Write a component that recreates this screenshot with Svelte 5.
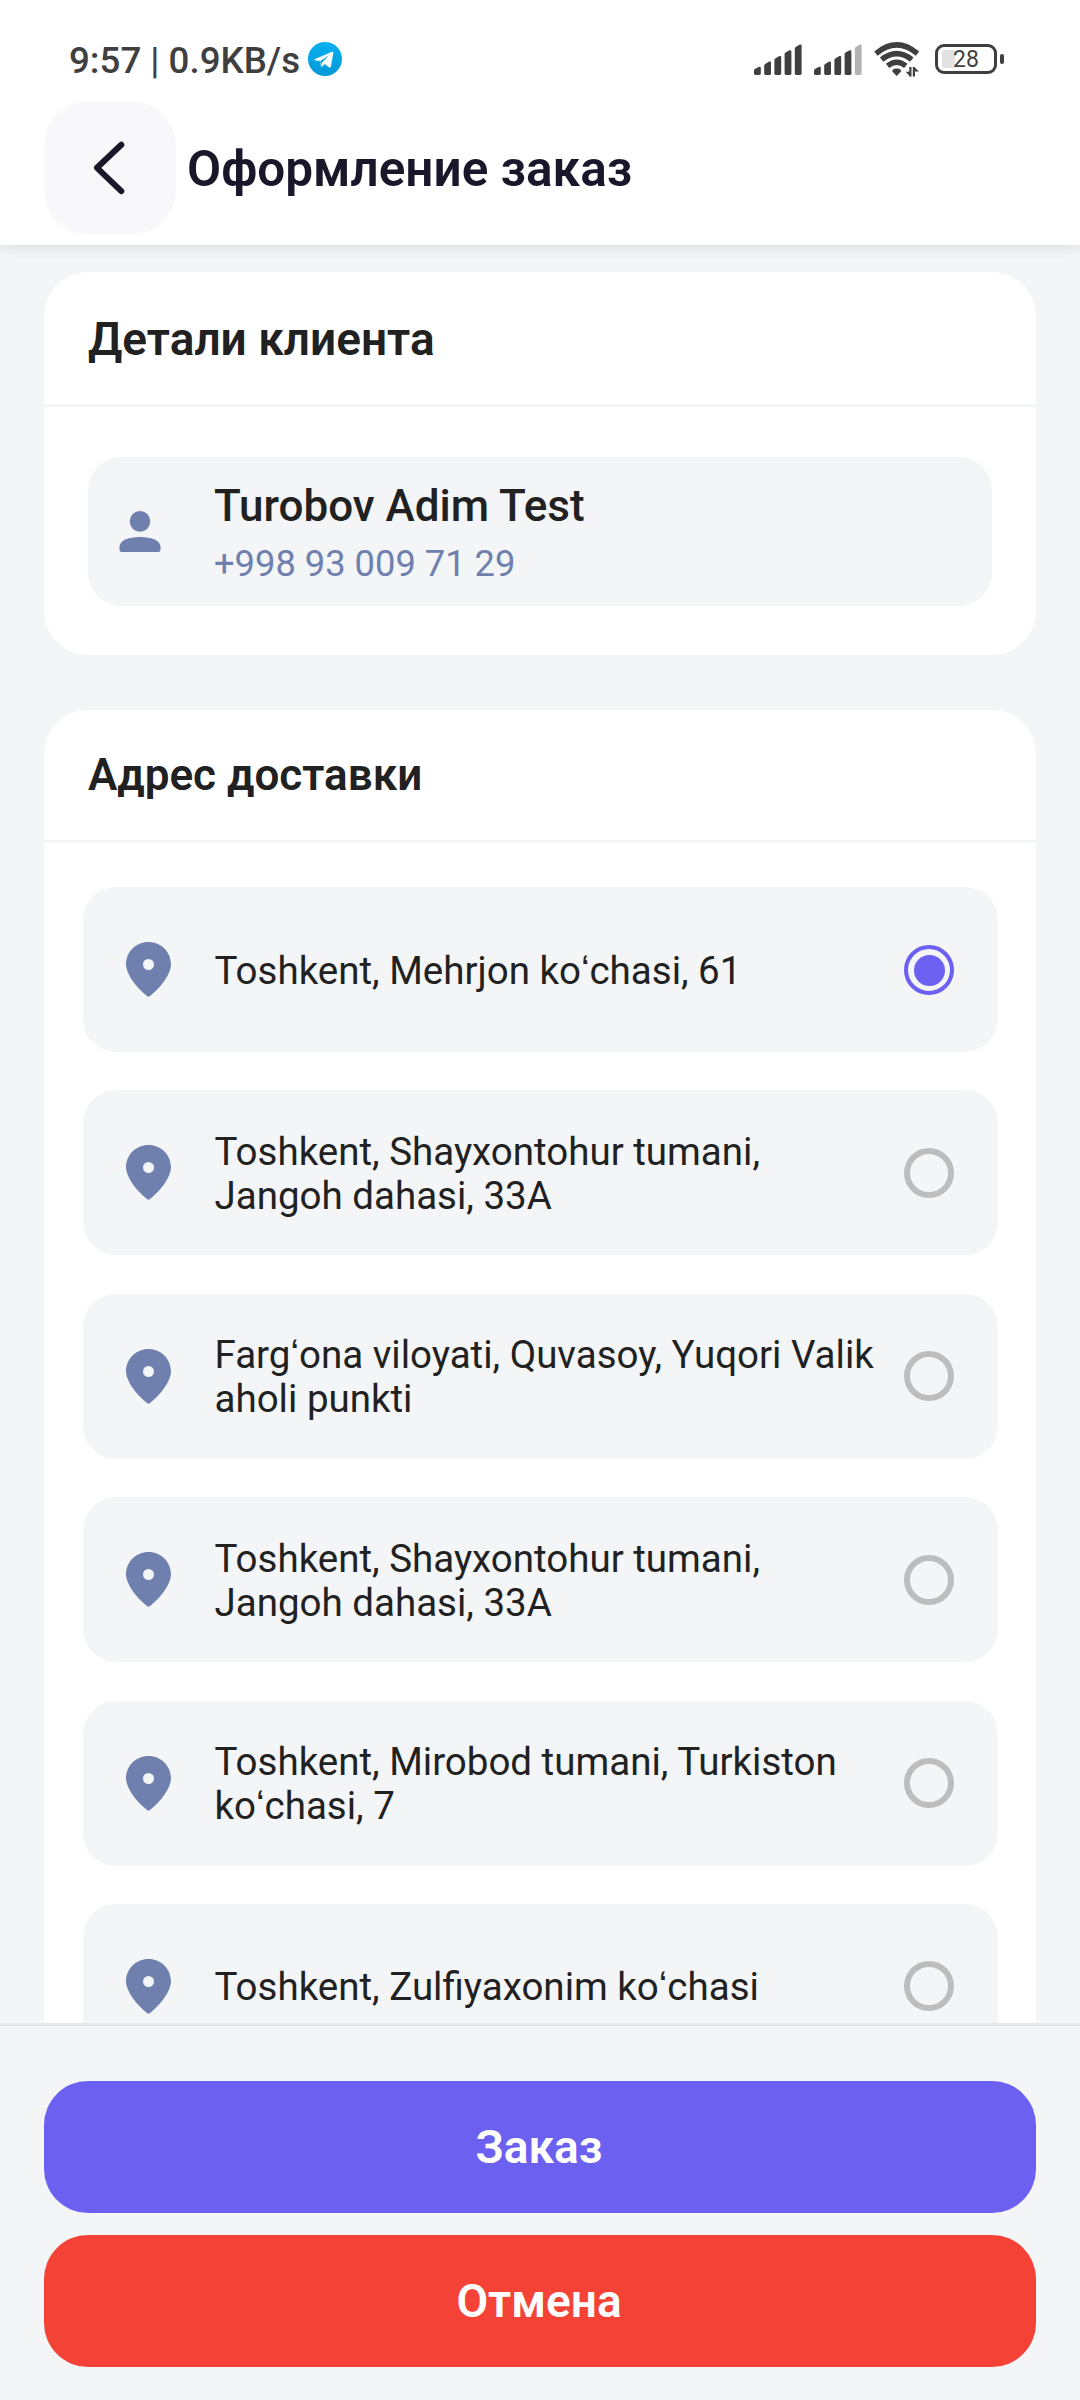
<script>
  let selected = $state(0);
  const addresses = [
    ['Toshkent, Mehrjon koʻchasi, 61'],
    ['Toshkent, Shayxontohur tumani,', 'Jangoh dahasi, 33A'],
    ['Fargʻona viloyati, Quvasoy, Yuqori Valik', 'aholi punkti'],
    ['Toshkent, Shayxontohur tumani,', 'Jangoh dahasi, 33A'],
    ['Toshkent, Mirobod tumani, Turkiston', 'koʻchasi, 7'],
    ['Toshkent, Zulfiyaxonim koʻchasi']
  ];
  const bars = [
    { x: 0, top: 22.5 },
    { x: 10.2, top: 17.3 },
    { x: 20.4, top: 11.8 },
    { x: 30.6, top: 6 },
    { x: 40.8, top: 0.3 }
  ];
</script>

{#snippet signal(level)}
  <svg class="signal" width="48" height="31" viewBox="0 0 48 31">
    {#each bars as b, i}
      <path
        class:dim={i >= level}
        d="M{b.x} {b.top + 4.2}Q{b.x} {b.top + 3.2} {b.x + 0.9} {b.top + 2.6}L{b.x + 5} {b.top + 0.3}Q{b.x + 6.8} {b.top - 0.3} {b.x + 6.8} {b.top + 1.5}V29.6Q{b.x + 6.8} 31 {b.x + 5.4} 31H{b.x + 1.4}Q{b.x} 31 {b.x} 29.6Z"
      />
    {/each}
  </svg>
{/snippet}

<div class="screen">
  <header>
    <div class="status">
      <span class="clock">9:57 | 0.9KB/s</span>
      <svg class="telegram" width="34" height="34" viewBox="0 0 34 34">
        <defs>
          <linearGradient id="tg" x1="0" y1="0" x2="0" y2="1">
            <stop offset="0" stop-color="#06b0f2" />
            <stop offset="1" stop-color="#0399d6" />
          </linearGradient>
        </defs>
        <circle cx="17" cy="17" r="17" fill="url(#tg)" />
        <path d="M6.6 17.2 24 9.8Q25.6 9.3 25.3 11L23 24.2Q22.6 26.2 21 25.2L16.6 22 14.3 24.5Q13.2 25.5 12.9 23.5L11.6 19 6.7 18.3Q5.7 17.8 6.6 17.2Z" fill="#fff" />
        <path d="M12 19.2 20.8 13.3 14.1 20.6 13.4 23.8Z" fill="#05a4e4" />
      </svg>
      <span class="spacer"></span>
      {@render signal(5)}
      {@render signal(4)}
      <svg class="wifi" width="46" height="36" viewBox="0 0 46 36">
        <g fill="none" stroke="#3f3f3f" stroke-width="5.4">
          <path d="M1.9 12.6Q22.7 -4.8 43.5 12.6" />
          <path d="M7.6 18.7Q22.7 6.6 37.8 18.7" />
          <path d="M13.6 24.8Q22.7 17.6 31.8 24.8" />
        </g>
        <path d="M22.7 35 18.300 30.600Q18.300 27.800 22.700 27.600T27.100 30.600Z" fill="#3f3f3f" />
        <path d="M33.5 24.500H46V36H30.5V29Z" fill="#fff" />
        <path d="M35.300 26V35.500H37.500V26ZM38.800 26V35.500H41V26Z" fill="#3f3f3f" />
        <path d="M31.700 30.800H36V35.500ZM40.200 26 45 30.500H40.200Z" fill="#3f3f3f" />
      </svg>
      <div class="battery"><i></i><b>28</b></div>
      <span class="nub"></span>
    </div>
    <div class="bar">
      <button class="back" aria-label="Назад">
        <svg width="132" height="132" viewBox="0 0 132 132">
          <path d="M77.3 42.8 53 65.8 77.3 89.2" fill="none" stroke="#1a172b" stroke-width="6" stroke-linecap="round" stroke-linejoin="round" />
        </svg>
      </button>
      <h1>Оформление заказ</h1>
    </div>
  </header>

  <main>
    <section class="card client">
      <h2 class="h-client">Детали клиента</h2>
      <div class="person">
        <svg width="42" height="42" viewBox="0 0 42 42">
          <ellipse cx="21" cy="10.4" rx="10.3" ry="10.3" />
          <path d="M.5 36C.5 29.5 9 26 21 26S41.5 29.5 41.5 36V38.5Q41.5 41 39 41H3Q.5 41 .5 38.5Z" />
        </svg>
        <div>
          <p class="name">Turobov Adim Test</p>
          <p class="phone">+998 93 009 71 29</p>
        </div>
      </div>
    </section>

    <section class="card addresses">
      <h2 class="h-address">Адрес доставки</h2>
      <div class="list">
        {#each addresses as lines, i}
          <button class="item" onclick={() => (selected = i)}>
            <svg class="pin" width="45" height="55" viewBox="0 0 45 55">
              <path fill-rule="evenodd" d="M22.5 0C35 0 45 9.8 45 22.5C45 31.5 35 45.5 24 54Q22.5 55.3 21 54C10 45.5 0 31.5 0 22.5C0 9.8 10 0 22.5 0ZM22.5 17A5.5 5.5 0 1 0 22.5 28A5.5 5.5 0 1 0 22.5 17Z" />
            </svg>
            <span class="text">
              {#each lines as line}<span>{line}</span>{/each}
            </span>
            <span class="radio" class:on={selected === i}></span>
          </button>
        {/each}
      </div>
    </section>
  </main>

  <footer>
    <button class="action order">Заказ</button>
    <button class="action cancel">Отмена</button>
  </footer>
</div>

<style>
  :global(body) {
    margin: 0;
    background: #f3f5f7;
  }
  .screen {
    width: 1080px;
    height: 2400px;
    overflow: hidden;
    display: flex;
    flex-direction: column;
    background: #f3f5f7;
    font-family: Roboto, 'Liberation Sans', sans-serif;
    color: #212121;
  }
  button {
    font: inherit;
    color: inherit;
    border: 0;
    padding: 0;
    margin: 0;
  }
  h1, h2, p { margin: 0; }
  header {
    flex: none;
    height: 245px;
    background: #fff;
    box-shadow: 0 2px 12px rgba(40, 50, 60, 0.12);
    z-index: 1;
  }
  .status {
    display: flex;
    align-items: center;
    height: 102px;
    box-sizing: border-box;
    padding: 16px 76px 0 68px;
    color: #3f3f3f;
  }
  .clock {
    width: 239px;
    padding: 3px 0 0 1px;
    font-size: 36.7px;
    font-weight: 500;
    line-height: 44px;
    white-space: nowrap;
  }
  .telegram { flex: none; }
  .spacer { flex: 1; }
  .signal {
    flex: none;
    margin-right: 12px;
    fill: #3f3f3f;
  }
  .signal .dim { fill: #b3b3b3; }
  .wifi { flex: none; margin-right: 15px; }
  .battery {
    width: 62px;
    height: 30px;
    box-sizing: border-box;
    border: 3px solid #3f3f3f;
    border-radius: 9px;
    padding: 3px 4px;
    display: flex;
    align-items: center;
    flex: none;
  }
  .battery i {
    width: 13px;
    height: 18px;
    background: #e2e2e2;
    border-radius: 3px 0 0 3px;
  }
  .battery b {
    font-weight: 400;
    font-size: 23px;
    line-height: 24px;
    margin: 2px 0 0 -2px;
  }
  .nub {
    width: 4px;
    height: 10px;
    border-radius: 2px;
    background: #3f3f3f;
    margin-left: 3px;
  }
  .bar {
    display: flex;
    align-items: center;
    padding-left: 44px;
  }
  .back {
    width: 132px;
    height: 132px;
    border-radius: 44px;
    background: #f8f8fa;
  }
  .back svg { display: block; }
  h1 {
    margin-left: 11px;
    padding-top: 2px;
    font-size: 49.5px;
    font-weight: 600;
    line-height: 58px;
    color: #1a172b;
  }
  main {
    flex: 1;
    min-height: 0;
    overflow: hidden;
    padding: 27px 44px 0;
  }
  .card {
    background: #fff;
    border-radius: 44px;
  }
  .client {
    height: 383px;
    margin-bottom: 55px;
  }
  h2 {
    box-sizing: border-box;
    padding-left: 44px;
    font-weight: 600;
    line-height: 52px;
    border-bottom: 3px solid #f4f5f6;
  }
  .h-client { height: 135px; padding-top: 41px; font-size: 46px; }
  .h-address { height: 133px; padding-top: 39px; font-size: 44px; }
  .person {
    box-sizing: border-box;
    height: 149px;
    margin: 50px 44px 0;
    border-radius: 33px;
    background: #f3f5f7;
    display: flex;
    align-items: center;
    padding-left: 31px;
  }
  .person svg { fill: #6f80af; margin-right: 53px; }
  .name { padding-top: 6px; font-size: 44px; font-weight: 500; line-height: 56px; }
  .phone { padding-top: 1px; font-size: 36.3px; line-height: 57px; color: #6f80af; }
  .list {
    padding: 44px 38.5px 0;
    display: flex;
    flex-direction: column;
    gap: 38.4px;
  }
  .item {
    display: flex;
    align-items: center;
    height: 165px;
    padding: 0 43.5px;
    border-radius: 33px;
    background: #f3f5f7;
    text-align: left;
  }
  .pin { fill: #6f80af; flex: none; }
  .text {
    flex: 1;
    margin-left: 43.5px;
    padding-top: 2px;
    font-size: 38.5px;
    line-height: 44px;
    white-space: nowrap;
    display: flex;
    flex-direction: column;
  }
  .radio {
    flex: none;
    width: 50px;
    height: 50px;
    box-sizing: border-box;
    border: 6px solid #bdbdbd;
    border-radius: 50%;
  }
  .radio.on {
    border: 4px solid #6c60f0;
    padding: 5.5px;
    background: #6c60f0 content-box;
  }
  footer {
    flex: none;
    box-sizing: border-box;
    height: 377px;
    border-top: 3px solid #e5e6e8;
    padding: 54.5px 44px 0;
    display: flex;
    flex-direction: column;
    gap: 22px;
  }
  .action {
    height: 132px;
    padding: 1px 2px 0 0;
    border-radius: 44px;
    color: #fff;
    font-size: 46px;
    font-weight: 600;
  }
  .order { background: #6c60f0; }
  .cancel { background: #f44336; }
</style>
